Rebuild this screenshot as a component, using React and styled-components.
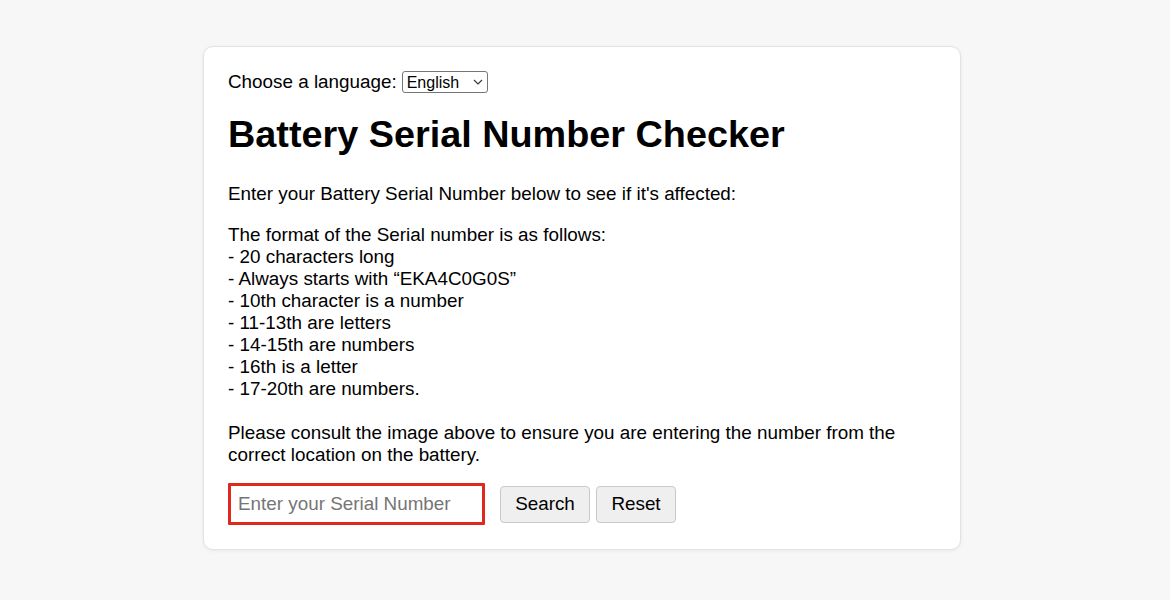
import React from 'react';
import styled, {createGlobalStyle} from 'styled-components';

const GlobalStyle = createGlobalStyle`
  html, body {
    margin: 0;
    padding: 0;
    background: #f7f7f7;
    overflow: hidden;
  }

  body {
    font-family: "Liberation Sans", Arial, Helvetica, sans-serif;
    color: #000;
  }
`;

const Page = styled.main`
  display: flex;
  justify-content: center;
  min-height: 600px;
  padding: 46px 6px 0 0;
  box-sizing: border-box;
`;

const Card = styled.section`
  width: 758px;
  height: 504px;
  box-sizing: border-box;
  background: #fff;
  border: 1px solid #e2e2e2;
  border-radius: 10px;
  box-shadow: 0 1px 4px rgba(0, 0, 0, 0.06);
  padding: 23px 24px 24px;
  font-size: 18.85px;
  line-height: 22px;
`;

const LanguageRow = styled.div`
  display: flex;
  align-items: center;
  height: 24px;
  gap: 5px;
`;

// select and chevron share one grid cell
const SelectWrap = styled.div`
  display: inline-grid;
  align-items: center;
  justify-items: end;

  & > * {
    grid-area: 1 / 1;
  }
`;

const LanguageSelect = styled.select`
  appearance: none;
  height: 22px;
  width: 86px;
  box-sizing: border-box;
  font-family: "Liberation Sans", Arial, sans-serif;
  font-size: 16px;
  color: #000;
  background: #fff;
  border: 1px solid #767676;
  border-radius: 3px;
  padding: 0 0 0 4px;
  outline: none;
`;

const Chevron = styled.svg`
  width: 10px;
  height: 6px;
  margin-right: 5px;
  pointer-events: none;
`;

const Title = styled.h1`
  margin: 18px 0 0;
  font-size: 37.8px;
  font-weight: 700;
  line-height: 44px;
`;

const Intro = styled.p`
  margin: 27px 0 0;
`;

const Rules = styled.p`
  margin: 19px 0 0;
`;

const Controls = styled.form`
  display: flex;
  align-items: center;
  margin-top: 17px;
`;

const SerialInput = styled.input`
  width: 257px;
  height: 42px;
  box-sizing: border-box;
  border: 3px solid #e0281e;
  border-radius: 1px;
  padding: 0 7px;
  font-family: "Liberation Sans", Arial, sans-serif;
  font-size: 18.85px;
  outline: none;

  &::placeholder {
    color: #757575;
  }
`;

const Button = styled.button`
  height: 37px;
  width: ${({$width}) => $width}px;
  margin-left: ${({$gap}) => $gap}px;
  box-sizing: border-box;
  background: #efefef;
  border: 1px solid #c9c9c9;
  border-radius: 4px;
  font-family: "Liberation Sans", Arial, sans-serif;
  font-size: 18.85px;
  color: #000;
  padding: 0;
`;

const rules = [
  'The format of the Serial number is as follows:',
  '- 20 characters long',
  '- Always starts with \u201cEKA4C0G0S\u201d',
  '- 10th character is a number',
  '- 11-13th are letters',
  '- 14-15th are numbers',
  '- 16th is a letter',
  '- 17-20th are numbers.'
];

export default function App() {
  return (
    <>
      <GlobalStyle />
      <Page>
        <Card>
          <LanguageRow>
            <label htmlFor="lang">Choose a language:</label>
            <SelectWrap>
              <LanguageSelect id="lang" defaultValue="en">
                <option value="en">English</option>
              </LanguageSelect>
              <Chevron viewBox="0 0 10 6" aria-hidden="true">
                <path d="M1 1l4 4 4-4" fill="none" stroke="#333" strokeWidth="1.1" />
              </Chevron>
            </SelectWrap>
          </LanguageRow>

          <Title>Battery Serial Number Checker</Title>

          <Intro>Enter your Battery Serial Number below to see if it's affected:</Intro>

          <Rules>
            {rules.map((line) => (
              <React.Fragment key={line}>
                {line}
                <br />
              </React.Fragment>
            ))}
            <br />
            Please consult the image above to ensure you are entering the number from the
            <br />
            correct location on the battery.
          </Rules>

          <Controls onSubmit={(e) => e.preventDefault()}>
            <SerialInput placeholder="Enter your Serial Number" />
            <Button $width={90} $gap={15} type="submit">Search</Button>
            <Button $width={80} $gap={6} type="reset">Reset</Button>
          </Controls>
        </Card>
      </Page>
    </>
  );
}
